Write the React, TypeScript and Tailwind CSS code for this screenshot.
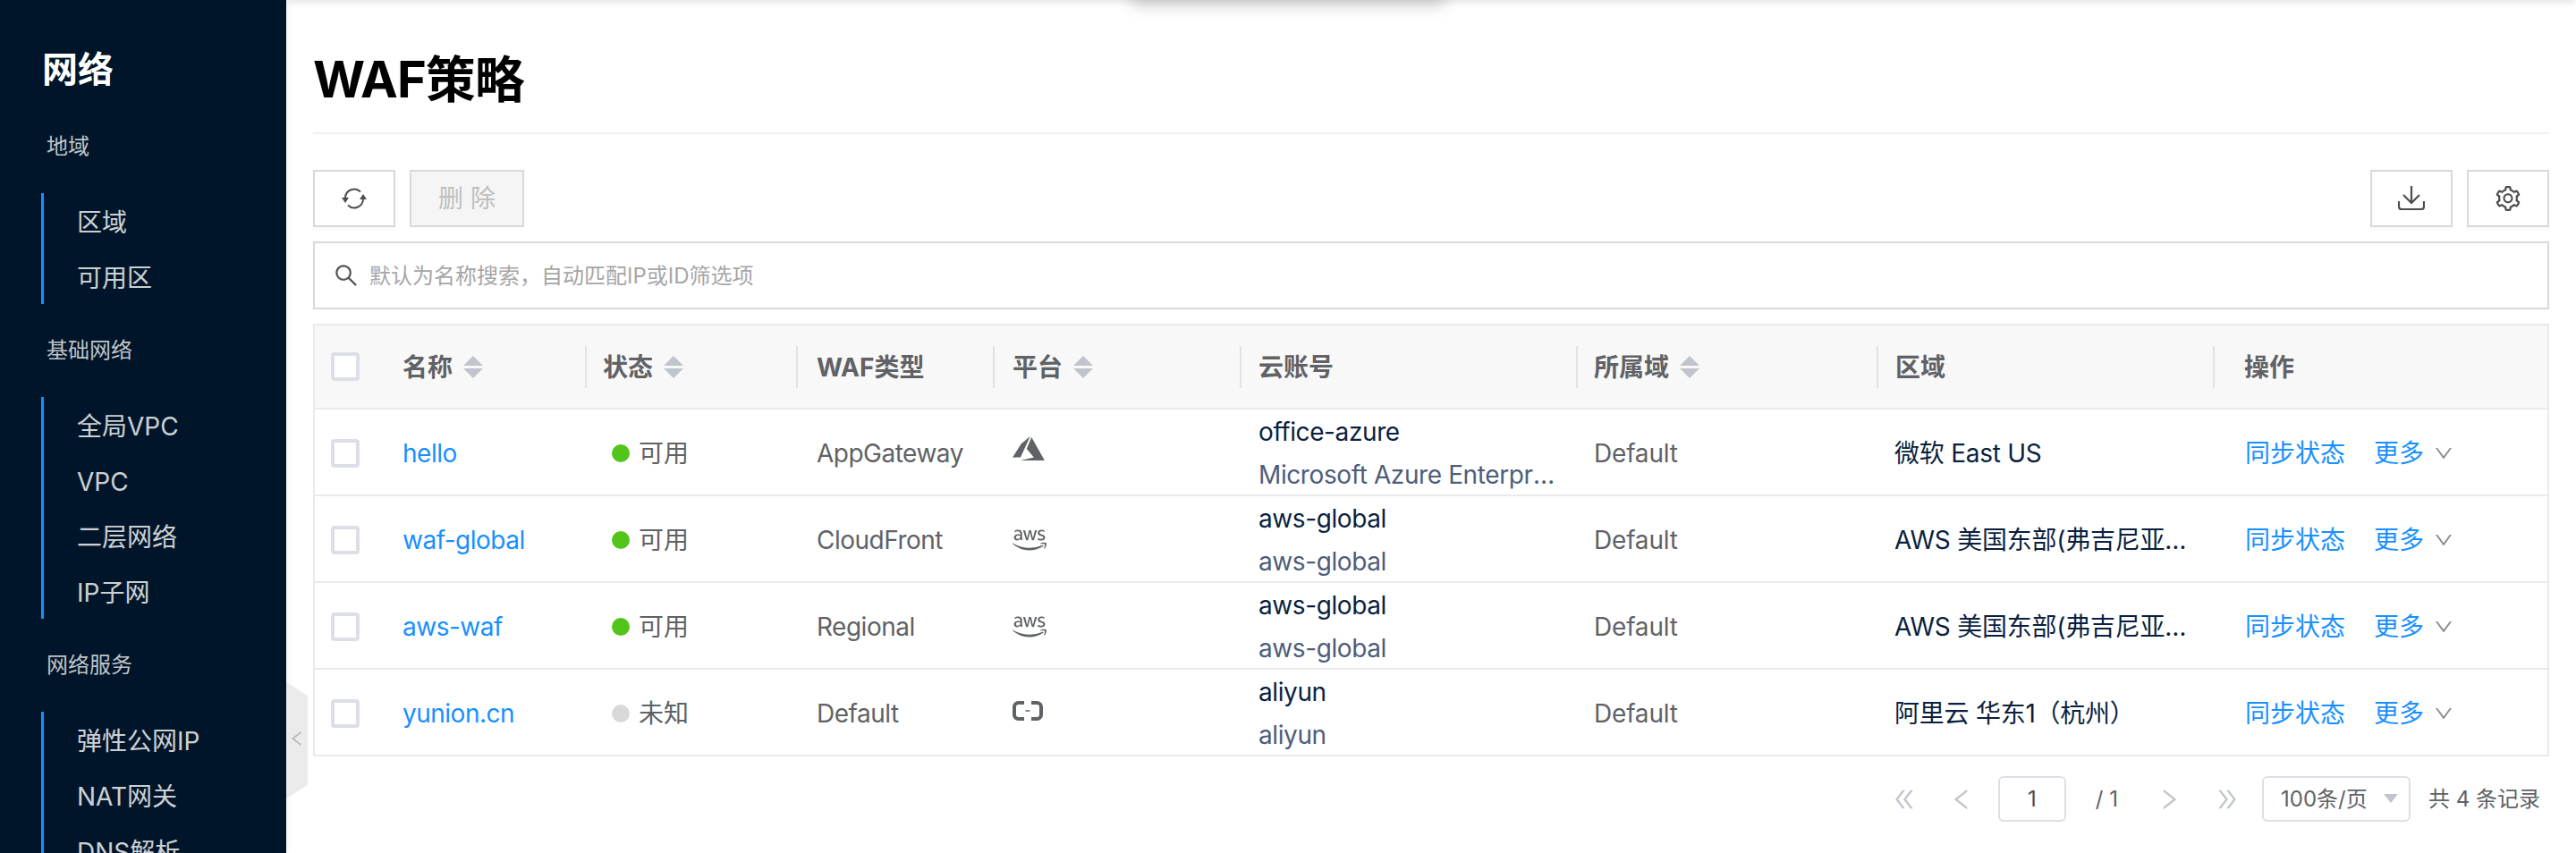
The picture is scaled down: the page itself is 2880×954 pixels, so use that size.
import {
  AiOutlineDoubleLeft,
  AiOutlineDoubleRight,
  AiOutlineDown,
  AiOutlineLeft,
  AiOutlineRight,
  AiOutlineSearch,
  AiOutlineSetting,
} from 'react-icons/ai';
import { FaAws } from 'react-icons/fa';

const navGroups = [
  { label: '地域', items: ['区域', '可用区'] },
  { label: '基础网络', items: ['全局VPC', 'VPC', '二层网络', 'IP子网'] },
  { label: '网络服务', items: ['弹性公网IP', 'NAT网关', 'DNS解析'] },
];

const gridCols = 'grid grid-cols-[80px_224px_236px_220px_276px_376px_336px_376px_1fr]';

const rows = [
  { name: 'hello', on: true, status: '可用', type: 'AppGateway', platform: 'azure', account: 'office-azure', sub: 'Microsoft Azure Enterprise', region: '微软 East US' },
  { name: 'waf-global', on: true, status: '可用', type: 'CloudFront', platform: 'aws', account: 'aws-global', sub: 'aws-global', region: 'AWS 美国东部(弗吉尼亚北部)' },
  { name: 'aws-waf', on: true, status: '可用', type: 'Regional', platform: 'aws', account: 'aws-global', sub: 'aws-global', region: 'AWS 美国东部(弗吉尼亚北部)' },
  { name: 'yunion.cn', on: false, status: '未知', type: 'Default', platform: 'aliyun', account: 'aliyun', sub: 'aliyun', region: '阿里云 华东1（杭州）' },
];

function SortIcon() {
  return (
    <svg width="22" height="25" viewBox="0 0 22 25" className="ml-[12px] shrink-0">
      <path d="M11 0 22 11H0z" fill="#c0c4cc" />
      <path d="M0 14h22L11 25z" fill="#c0c4cc" />
    </svg>
  );
}

function SyncIcon() {
  return (
    <svg width="28" height="24" viewBox="0 0 28 24" fill="none" stroke="#4d4d4d" strokeWidth="2">
      <path d="M4 11A10 10 0 0 1 21 4.500" />
      <path d="M24 13A10 10 0 0 1 7 19.500" />
      <path d="M0 11h8l-4 6z" fill="#4d4d4d" stroke="none" />
      <path d="M20 13h8l-4-6z" fill="#4d4d4d" stroke="none" />
    </svg>
  );
}

function DownloadIcon() {
  return (
    <svg width="30" height="28" viewBox="0 0 30 28" fill="none" stroke="#4d4d4d" strokeWidth="2.2">
      <path d="M15 0v19" />
      <path d="M6 10l9 9 9-9" />
      <path d="M1 17v6a3 3 0 0 0 3 3h22a3 3 0 0 0 3-3v-6" />
    </svg>
  );
}

function AliyunIcon() {
  return (
    <svg width="34" height="22" viewBox="0 0 34 22" fill="none" stroke="#5f6368" className="-mt-[6px]">
      <path d="M13 2H6.500A4.500 4.500 0 0 0 2 6.500v9A4.500 4.500 0 0 0 6.500 20H13" strokeWidth="4" />
      <path d="M21 2h6.500A4.500 4.500 0 0 1 32 6.500v9a4.500 4.500 0 0 1-4.500 4.500H21" strokeWidth="4" />
      <path d="M14.500 11h5" strokeWidth="1.500" />
    </svg>
  );
}

function Checkbox() {
  return <div className="ml-[18px] h-[32px] w-[32px] rounded-[4px] border-[4px] border-[#dcdfe6] bg-white" />;
}

function HeadCell({ title, sort, pad = 'pl-[18px]', last }: { title: string; sort?: boolean; pad?: string; last?: boolean }) {
  return (
    <div className={`flex items-center ${pad}`}>
      <span className="pt-[2px] text-[28px] font-bold text-[#606266]">{title}</span>
      {sort && <SortIcon />}
      {!last && <div className="ml-auto h-[47px] w-[2px] bg-[#e3e3e3]" />}
    </div>
  );
}

function PlatformIcon({ platform }: { platform: string }) {
  if (platform === 'azure') {
    return (
      <svg width="36" height="29" viewBox="0 0 105 85" fill="#5f6368" className="-mt-[10px]">
        <path d="M58 2 28 28 0 72h26z" />
        <path d="M62 6 46 44l24 28-44 10h79z" />
      </svg>
    );
  }
  if (platform === 'aws') return <FaAws size={38} color="#5f6368" />;
  return <AliyunIcon />;
}

export default function App() {
  return (
    <div className="relative flex h-[954px] w-[2880px] overflow-hidden bg-white font-['Inter','Noto_Sans_CJK_SC',sans-serif]">
      {/* Sidebar */}
      <aside className="relative z-10 h-full w-[320px] shrink-0 overflow-hidden bg-[#001529] shadow-[2px_0_8px_rgba(0,0,0,0.05)]">
        <div className="h-[112px] pl-[47px] pt-[44px] text-[40px] font-bold leading-[68px] text-white">网络</div>
        {navGroups.map((group) => (
          <div key={group.label}>
            <div className="flex h-[104px] items-center pl-[52px] text-[24px] text-white/75">{group.label}</div>
            <div className="ml-[46px] border-l-[3px] border-[#1890ff] pl-[37px]">
              {group.items.map((item) => (
                <div key={item} className="flex h-[62px] items-center pt-[3px] text-[28px] text-white/80">{item}</div>
              ))}
            </div>
          </div>
        ))}
      </aside>

      {/* Sidebar collapse tab */}
      <div className="absolute left-[320px] top-[763px] z-10 flex h-[130px] w-[24px] items-center bg-[#ebebeb] [clip-path:polygon(0_0,100%_15px,100%_calc(100%-15px),0_100%)]">
        <AiOutlineLeft size={22} color="#b8b8b8" className="ml-[1px] mt-[-4px]" />
      </div>

      {/* Shadow of the top bar, mostly off the page */}
      <div className="absolute left-[320px] right-0 top-[-10px] h-[10px] shadow-[0_2px_8px_rgba(0,0,0,0.12)]" />
      <div className="absolute left-[1265px] top-[-10px] h-[10px] w-[350px] shadow-[0_4px_18px_rgba(0,0,0,0.28)]" />

      <main className="min-w-0 flex-1 px-[30px]">
        <div className="flex h-[148px] items-center pt-[30px] text-[56px] font-bold tracking-[-1px] text-black">WAF策略</div>
        <div className="h-[2px] bg-[#f0f0f0]" />

        {/* Toolbar */}
        <div className="mt-[40px] flex h-[64px] gap-[16px]">
          <button className="flex w-[92px] items-center justify-center border-2 border-[#d9d9d9] bg-white shadow-[0_4px_0_rgba(0,0,0,0.015)]">
            <SyncIcon />
          </button>
          <button className="w-[128px] border-2 border-[#d9d9d9] bg-[#f5f5f5] text-[28px] text-[#bfbfbf]">删 除</button>
          <button className="ml-auto flex w-[92px] items-center justify-center border-2 border-[#d9d9d9] bg-white shadow-[0_4px_0_rgba(0,0,0,0.015)]">
            <DownloadIcon />
          </button>
          <button className="flex w-[92px] items-center justify-center border-2 border-[#d9d9d9] bg-white text-[#4d4d4d] shadow-[0_4px_0_rgba(0,0,0,0.015)]">
            <AiOutlineSetting size={32} />
          </button>
        </div>

        {/* Search */}
        <div className="mt-[16px] flex h-[76px] items-center gap-[11px] border-2 border-[#d9d9d9] pl-[20px]">
          <AiOutlineSearch size={30} color="#555" />
          <span className="pt-[2px] text-[24px] text-[#a6a6a6]">默认为名称搜索，自动匹配IP或ID筛选项</span>
        </div>

        {/* Table */}
        <div className="mt-[16px] border-x-2 border-t-2 border-[#e8eaec]">
          <div className={`${gridCols} h-[94px] border-b-2 border-[#e8eaec] bg-[#f8f8f8]`}>
            <div className="flex items-center"><Checkbox /></div>
            <HeadCell title="名称" sort pad="pl-[18px]" />
            <HeadCell title="状态" sort />
            <HeadCell title="WAF类型" pad="pl-[21px]" />
            <HeadCell title="平台" sort pad="pl-[20px]" />
            <HeadCell title="云账号" pad="pl-[19px]" />
            <HeadCell title="所属域" sort />
            <HeadCell title="区域" pad="pl-[19px]" />
            <HeadCell title="操作" pad="pl-[33px]" last />
          </div>
          {rows.map((row) => (
            <div key={row.name} className={`${gridCols} h-[97px] border-b-2 border-[#e8eaec] text-[28px] text-[#606266]`}>
              <div className="flex items-center"><Checkbox /></div>
              <div className="flex items-center pl-[18px] tracking-[-0.5px] text-[#1890ff]">{row.name}</div>
              <div className="flex items-center gap-[10px] pl-[28px]">
                <span className={`h-[20px] w-[20px] rounded-full ${row.on ? 'bg-[#52c41a]' : 'bg-[#d9d9d9]'}`} />
                {row.status}
              </div>
              <div className="flex items-center pl-[21px] tracking-[-0.5px]">{row.type}</div>
              <div className="flex items-center pl-[20px]"><PlatformIcon platform={row.platform} /></div>
              <div className="flex flex-col justify-center pl-[19px] pt-[1px] leading-[48px] tracking-[-0.4px]">
                <span className="text-[#0b1f3f]">{row.account}</span>
                <span className="w-[332px] truncate text-[#4f5d7a]">{row.sub}</span>
              </div>
              <div className="flex items-center pl-[18px] tracking-[-0.2px]">Default</div>
              <div className="flex items-center pl-[18px] tracking-[-0.25px] text-[#0b1f3f]">
                <span className="w-[336px] truncate">{row.region}</span>
              </div>
              <div className="flex items-center pl-[34px] text-[#1890ff]">
                <span>同步状态</span>
                <span className="ml-[32px]">更多</span>
                <AiOutlineDown size={24} color="#8c8c8c" className="ml-[10px]" />
              </div>
            </div>
          ))}
        </div>

        {/* Pagination */}
        <div className="mt-[22px] flex h-[51px] items-center justify-end pr-[10px] text-[24px] text-[#606266]">
          <AiOutlineDoubleLeft size={30} color="#c0c4cc" />
          <AiOutlineLeft size={30} color="#c0c4cc" className="ml-[34px]" />
          <div className="ml-[26px] flex h-[51px] w-[76px] items-center justify-center rounded-[6px] border-2 border-[#dcdfe6] text-[#4d4d4d]">1</div>
          <span className="ml-[33px]">/ 1</span>
          <AiOutlineRight size={30} color="#c0c4cc" className="ml-[42px]" />
          <AiOutlineDoubleRight size={30} color="#c0c4cc" className="ml-[35px]" />
          <div className="relative ml-[24px] flex h-[51px] w-[166px] items-center rounded-[6px] border-2 border-[#dcdfe6] pl-[19px]">
            100条/页
            <span className="absolute right-[12px] top-[18px] h-0 w-0 border-x-[8px] border-t-[10px] border-x-transparent border-t-[#c0c4cc]" />
          </div>
          <span className="ml-[20px]">共 4 条记录</span>
        </div>
      </main>
    </div>
  );
}
